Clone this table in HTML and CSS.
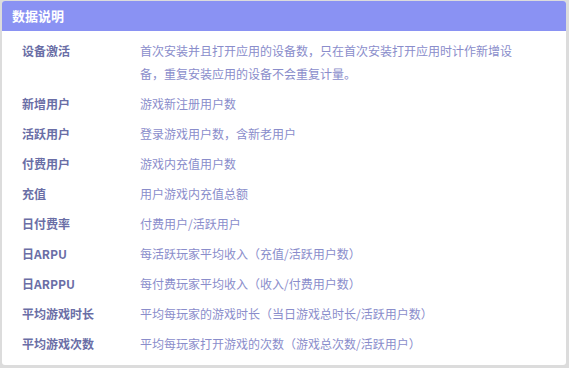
FILE: index.html
```html
<!DOCTYPE html>
<html lang="zh">
<head>
<meta charset="utf-8">
<link rel="stylesheet" href="styles.css">
</head>
<body>
<div class="panel">
  <div class="header">数据说明</div>
  <div class="body">
    <div class="row"><div class="label">设备激活</div><div class="desc">首次安装并且打开应用的设备数，只在首次安装打开应用时计作新增设备，重复安装应用的设备不会重复计量。</div></div>
    <div class="row"><div class="label">新增用户</div><div class="desc">游戏新注册用户数</div></div>
    <div class="row"><div class="label">活跃用户</div><div class="desc">登录游戏用户数，含新老用户</div></div>
    <div class="row"><div class="label">付费用户</div><div class="desc">游戏内充值用户数</div></div>
    <div class="row"><div class="label">充值</div><div class="desc">用户游戏内充值总额</div></div>
    <div class="row"><div class="label">日付费率</div><div class="desc">付费用户/活跃用户</div></div>
    <div class="row"><div class="label">日ARPU</div><div class="desc">每活跃玩家平均收入（充值/活跃用户数）</div></div>
    <div class="row"><div class="label">日ARPPU</div><div class="desc">每付费玩家平均收入（收入/付费用户数）</div></div>
    <div class="row"><div class="label">平均游戏时长</div><div class="desc">平均每玩家的游戏时长（当日游戏总时长/活跃用户数）</div></div>
    <div class="row"><div class="label">平均游戏次数</div><div class="desc">平均每玩家打开游戏的次数（游戏总次数/活跃用户）</div></div>
  </div>
</div>
</body>
</html>
```
FILE: styles.css
```css
html, body {
  margin: 0;
  padding: 0;
  background: #dcdcdc;
}
body {
  padding: 1px 3px 3px 2px;
  height: 368px;
  box-sizing: border-box;
  font-family: "Microsoft YaHei", "Noto Sans CJK SC", sans-serif;
  font-size: 12px;
}
.panel {
  background: #ffffff;
  border-radius: 3px;
  height: 364px;
  overflow: hidden;
}
.header {
  background: #8a92f3;
  color: #ffffff;
  font-weight: bold;
  font-size: 13px;
  height: 30px;
  line-height: 30px;
  padding-left: 10px;
}
.body {
  padding-top: 5px;
  padding-left: 20px;
}
.row {
  display: flex;
  padding: 3px 0 4px;
  line-height: 23px;
}
.label {
  width: 118px;
  flex: none;
  font-weight: bold;
  color: #6a6ea6;
}
.desc {
  width: 373px;
  color: #8a8dcb;
  text-spacing-trim: space-all;
  line-break: strict;
}
```
